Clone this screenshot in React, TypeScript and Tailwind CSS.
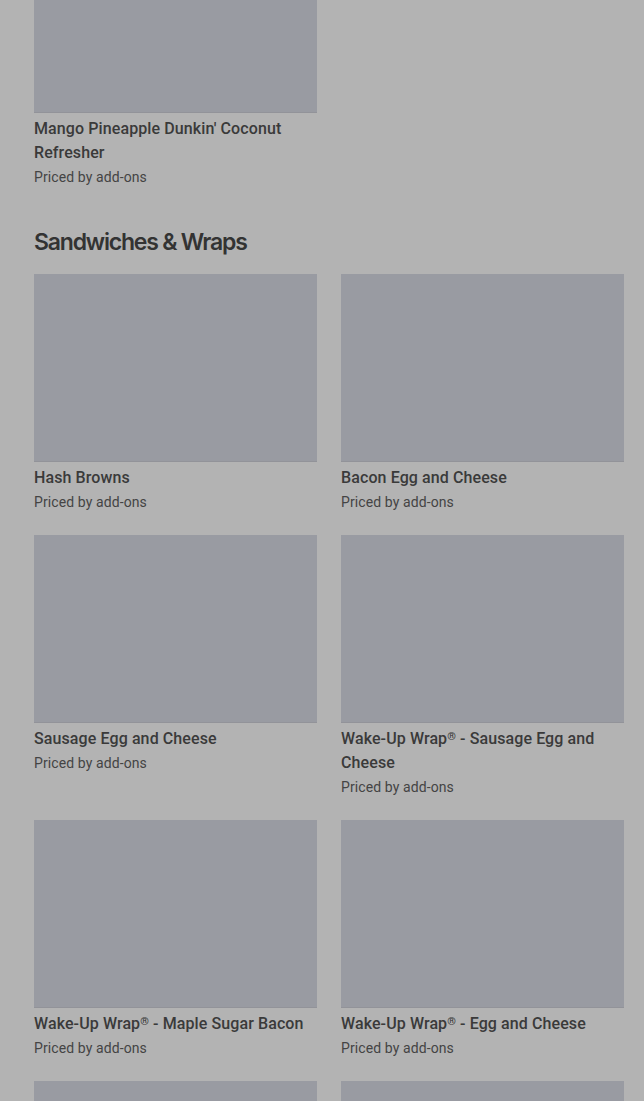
import React from 'react';

// Menu category list, seen behind a dimmed overlay

interface MenuItem {
  name: string;
  note: string;
}

const PREVIOUS: MenuItem[] = [
  { name: "Mango Pineapple Dunkin' Coconut Refresher", note: 'Priced by add-ons' },
];

const SANDWICHES: MenuItem[] = [
  { name: 'Hash Browns', note: 'Priced by add-ons' },
  { name: 'Bacon Egg and Cheese', note: 'Priced by add-ons' },
  { name: 'Sausage Egg and Cheese', note: 'Priced by add-ons' },
  { name: 'Wake-Up Wrap® - Sausage Egg and Cheese', note: 'Priced by add-ons' },
  { name: 'Wake-Up Wrap® - Maple Sugar Bacon', note: 'Priced by add-ons' },
  { name: 'Wake-Up Wrap® - Egg and Cheese', note: 'Priced by add-ons' },
  { name: 'Wake-Up Wrap® - Turkey Sausage', note: 'Priced by add-ons' },
  { name: 'Sourdough Breakfast Sandwich', note: 'Priced by add-ons' },
];

// small raised ® like the reference, without growing the line box
function ItemName({ name }: { name: string }) {
  const parts = name.split('®');
  return (
    <>
      {parts.map((part, i) => (
        <React.Fragment key={i}>
          {part}
          {i < parts.length - 1 && <span className="text-[11px] leading-[0] align-[4px]">®</span>}
        </React.Fragment>
      ))}
    </>
  );
}

function ItemCard({ item }: { item: MenuItem }) {
  return (
    <div className="flex flex-col">
      <div className="h-[188px] bg-[#999ba2] border-b border-[#929399]"></div>
      <p className="mt-1 text-[16px] leading-6 font-medium tracking-[0.1px] text-[#3a3a3a]">
        <ItemName name={item.name} />
      </p>
      <p className="text-[14px] leading-6 text-[#444444] tracking-[0.1px]">{item.note}</p>
    </div>
  );
}

export default function App() {
  return (
    <div
      className="min-h-screen bg-[#b3b3b3] pl-[34px] pr-[20px] overflow-hidden"
      style={{ fontFamily: 'Roboto, "Liberation Sans", sans-serif' }}
    >
      <div className="-mt-[75px] grid grid-cols-2 gap-x-6 gap-y-[21px]">
        {PREVIOUS.map(item => (
          <ItemCard key={item.name} item={item} />
        ))}
      </div>

      <h2
        className="mt-[37px] mb-[16px] text-[23px] leading-8 font-semibold tracking-[-1.2px] text-[#333333]"
        style={{ fontFamily: 'Inter, "Liberation Sans", sans-serif' }}
      >
        Sandwiches &amp; Wraps
      </h2>

      <div className="grid grid-cols-2 gap-x-6 gap-y-[21px]">
        {SANDWICHES.map(item => (
          <ItemCard key={item.name} item={item} />
        ))}
      </div>
    </div>
  );
}
